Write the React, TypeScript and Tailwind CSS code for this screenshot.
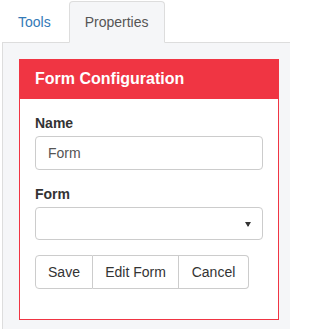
import { useState } from "react"

export default function App() {
  const [tab, setTab] = useState("properties")
  const [name, setName] = useState("Form")

  return (
    <div className="w-[290px] h-[329px] overflow-hidden bg-white font-['Liberation_Sans',Arial,sans-serif] text-[14px] leading-[20px] text-[#333]">
      {/* Tabs */}
      <div className="flex pl-[2px] pt-px relative z-10">
        <button
          onClick={() => setTab("tools")}
          className={`mr-[2px] -mb-px px-[15px] py-[10px] border rounded-t-[4px] ${
            tab === "tools"
              ? "bg-[#f5f6f8] border-[#ddd] border-b-transparent text-[#555]"
              : "border-transparent text-[#337ab7]"
          }`}
        >
          Tools
        </button>
        <button
          onClick={() => setTab("properties")}
          className={`-mb-px px-[15px] py-[10px] border rounded-t-[4px] ${
            tab === "properties"
              ? "bg-[#f5f6f8] border-[#ddd] border-b-[#f5f6f8] text-[#555]"
              : "border-transparent text-[#337ab7]"
          }`}
        >
          Properties
        </button>
      </div>

      {/* Tab pane */}
      <div className="ml-[2px] h-[300px] border-l border-t border-[#ddd] bg-[#f5f6f8] pl-4 pt-4">
        <div className="w-[260px] bg-white">
          <div className="h-[40px] bg-[#f03543] px-[16px] flex items-center text-white font-bold text-[16px]">
            Form Configuration
          </div>

          <div className="border border-t-0 border-[#f03543] px-[15px] pt-[14px] pb-[30px]">
            <label className="block font-bold mb-[3px]">Name</label>
            <input
              value={name}
              onChange={e => setName(e.target.value)}
              className="block w-full h-[34px] px-3 border border-[#ccc] rounded-[4px] text-[#555] outline-none"
            />

            <label className="block font-bold mt-[14px] mb-[3px]">Form</label>
            <div className="relative">
              <select className="block w-full h-[33px] px-3 border border-[#ccc] rounded-[4px] bg-white appearance-none text-[#555] outline-none">
                <option></option>
              </select>
              <svg
                className="absolute right-[12px] top-[15px] pointer-events-none"
                width="6"
                height="5"
                viewBox="0 0 6 5"
              >
                <path d="M0 0 H6 L3 5 Z" fill="#333" />
              </svg>
            </div>

            <div className="flex mt-[15px]">
              <button className="h-[34px] w-[58px] border border-[#ccc] rounded-l-[4px] bg-white">Save</button>
              <button className="h-[34px] w-[86px] border border-l-0 border-[#ccc] bg-white">Edit Form</button>
              <button className="h-[34px] w-[70px] border border-l-0 border-[#ccc] rounded-r-[4px] bg-white">Cancel</button>
            </div>
          </div>
        </div>
      </div>
    </div>
  )
}
